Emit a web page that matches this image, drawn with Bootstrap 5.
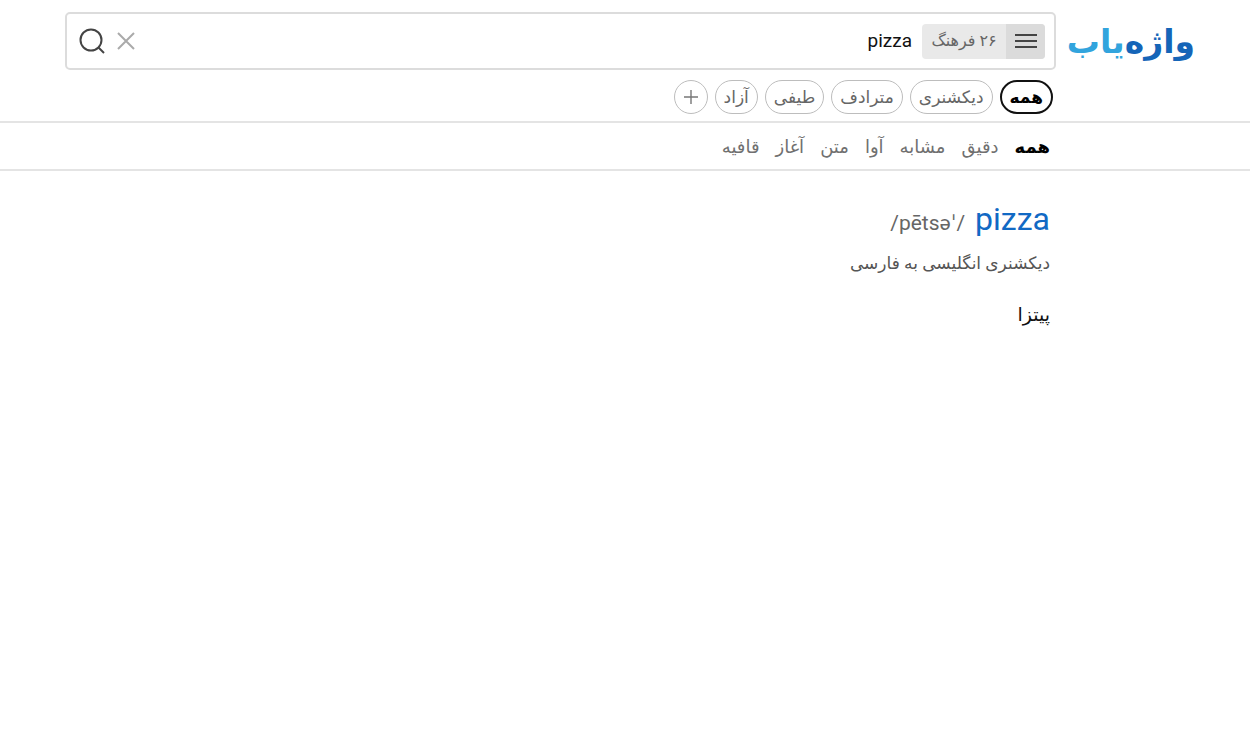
<!DOCTYPE html>
<html lang="fa" dir="rtl">
<head>
<meta charset="utf-8">
<meta name="viewport" content="width=device-width, initial-scale=1">
<title>واژه‌یاب</title>
<link rel="stylesheet" href="https://cdn.jsdelivr.net/npm/bootstrap@5.3.0/dist/css/bootstrap.min.css">
<style>
body { font-family: Roboto, "DejaVu Sans", sans-serif; color: #111; background: #fff; }
.page-pad { padding-inline: 55px 65px; }
.results-inset { padding-inline: 200px 65px; }
.brand-name { width: 127px; padding-top: 12px; font: bold 33px/44px "DejaVu Sans", sans-serif; color: #1565b8; white-space: nowrap; }
.brand-name .tail { color: #32a4dd; }
.header-row { gap: 12px; }
.search-box { height: 58px; border: 2px solid #dcdcdc; border-radius: 5px; padding-inline: 9px 12px; }
.dict-btn { height: 35px; border: 0; border-radius: 4px; overflow: hidden; background: #e9e9e9; color: #666; font-size: 16px; }
.dict-btn .bars { width: 39px; background: #dbdbdb; }
.dict-btn .count { width: 84px; }
.query { font: 19px/28px Roboto, "DejaVu Sans", sans-serif; color: #111; outline: 0; background: none; padding: 0 10px; }
.icon-btn { border: 0; background: none; padding: 0; }
.search-actions { gap: 12px; }
.filters { gap: 7px; padding: 10px 3px 7px; }
.pill { height: 34px; border: 1px solid #bdbdbd; border-radius: 17px; color: #666; background: #fff; font-size: 17px; line-height: 30px; padding: 0 8px; white-space: nowrap; }
.pill.active { border: 2px solid #111; color: #000; font-weight: 700; }
.pill.plus { width: 34px; padding: 0; }
.line { border-bottom: 2px solid #e4e4e4; }
.modes { height: 48px; gap: 16px; font-size: 18px; }
.modes a { color: #707070; text-decoration: none; white-space: nowrap; }
.modes a.active { color: #000; font-weight: 700; }
.headword { gap: 10px; padding-top: 28px; }
.word { font-size: 32px; line-height: 40px; color: #1169c4; text-decoration: none; }
.phonetic { font-size: 21px; color: #666; }
.source { font-size: 17px; line-height: 24px; color: #555; margin: 12px 0 26px; }
.meaning { font-size: 19px; line-height: 28px; color: #111; }
</style>
</head>
<body>
<header>
  <div class="line">
    <div class="page-pad header-row d-flex pt-2">
      <a class="brand-name text-decoration-none" href="#">واژه‌<span class="tail">یاب</span></a>
      <div class="flex-grow-1 pt-1">
        <form class="search-box d-flex align-items-center">
          <button type="button" class="dict-btn d-flex p-0">
            <span class="bars h-100 d-flex align-items-center justify-content-center">
              <svg width="22" height="16" viewBox="0 0 22 16" stroke="#444" stroke-width="2"><path d="M0 2h22M0 8h22M0 14h22"/></svg>
            </span>
            <span class="count h-100 d-flex align-items-center justify-content-center">۲۶ فرهنگ</span>
          </button>
          <input class="query border-0 flex-grow-1" type="text" value="pizza" aria-label="جستجو">
          <div class="search-actions d-flex align-items-center">
            <button type="button" class="icon-btn d-flex" aria-label="پاک کردن">
              <svg width="18" height="18" viewBox="0 0 18 18" fill="none" stroke="#aaa" stroke-width="2"><path d="M1 1l16 16M17 1L1 17"/></svg>
            </button>
            <button type="submit" class="icon-btn d-flex" aria-label="جستجو">
              <svg width="26" height="26" viewBox="0 0 26 26" fill="none" stroke="#444" stroke-width="2"><circle cx="12" cy="12" r="10.5"/><path d="M19 19l6 6"/></svg>
            </button>
          </div>
        </form>
        <div class="filters d-flex">
          <button type="button" class="pill active">همه</button>
          <button type="button" class="pill">دیکشنری</button>
          <button type="button" class="pill">مترادف</button>
          <button type="button" class="pill">طیفی</button>
          <button type="button" class="pill">آزاد</button>
          <button type="button" class="pill plus d-flex align-items-center justify-content-center" aria-label="افزودن">
            <svg width="14" height="14" viewBox="0 0 14 14" stroke="#777" stroke-width="1.4"><path d="M7 0v14M0 7h14"/></svg>
          </button>
        </div>
      </div>
    </div>
  </div>
  <nav class="modes results-inset line d-flex align-items-center">
    <a class="active" href="#">همه</a>
    <a href="#">دقیق</a>
    <a href="#">مشابه</a>
    <a href="#">آوا</a>
    <a href="#">متن</a>
    <a href="#">آغاز</a>
    <a href="#">قافیه</a>
  </nav>
</header>
<main class="results-inset">
  <h1 class="headword d-flex align-items-baseline m-0 fw-normal"><a class="word" href="#">pizza</a><span class="phonetic">/ˈpētsə/</span></h1>
  <p class="source">دیکشنری انگلیسی به فارسی</p>
  <p class="meaning m-0">پیتزا</p>
</main>
<script src="https://cdn.jsdelivr.net/npm/bootstrap@5.3.0/dist/js/bootstrap.bundle.min.js"></script>
</body>
</html>
